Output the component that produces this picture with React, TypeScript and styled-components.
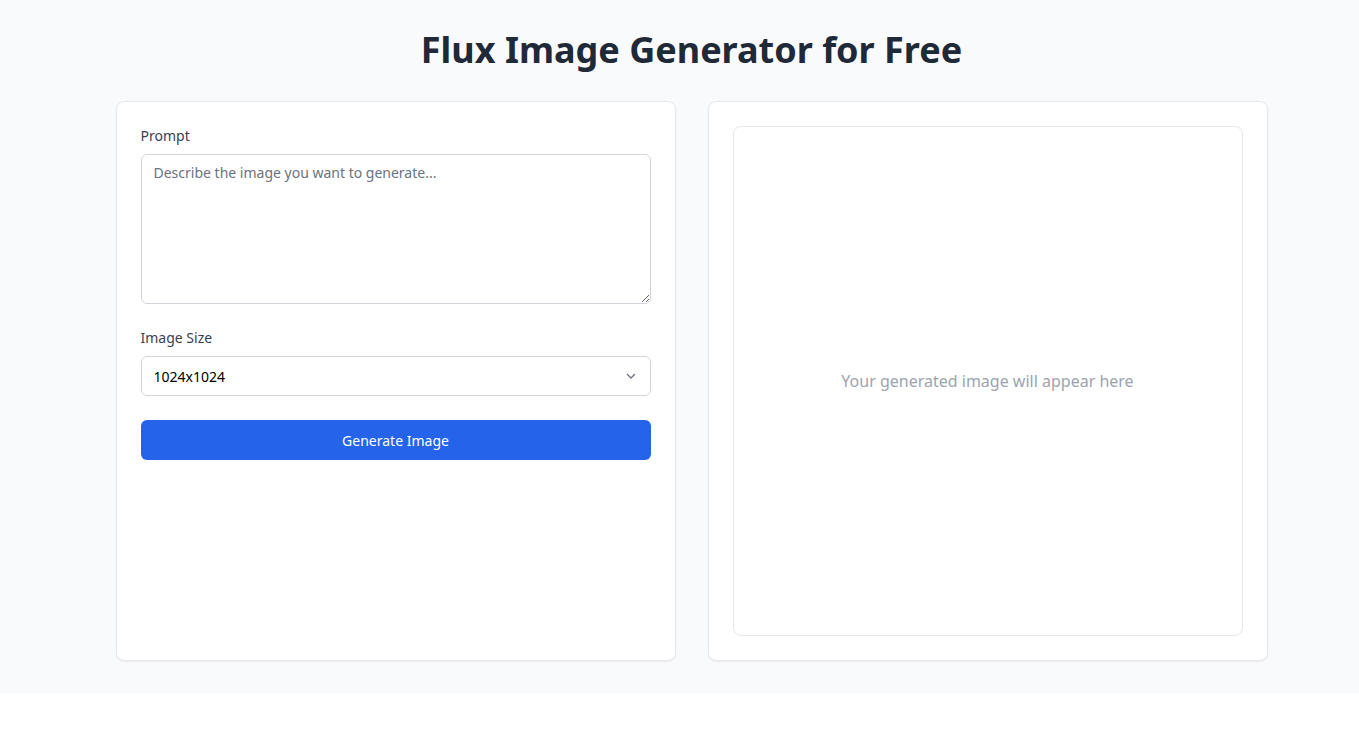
import React from "react";
import styled, {createGlobalStyle} from "styled-components";

const GlobalStyle = createGlobalStyle`
  html, body {
    margin: 0;
    padding: 0;
    background: #ffffff;
  }

  * {
    box-sizing: border-box;
  }

  body {
    font-family: "Noto Sans", "Open Sans", Arial, sans-serif;
    color: #1f2937;
  }
`

export const Page = styled.div`
  background: #f9fafb;
  padding: 30px 0 32px 24px;
`

export const Title = styled.h1`
  margin: 0 0 31px;
  text-align: center;
  font-size: 36px;
  line-height: 40px;
  font-weight: 700;
  color: #1f2937;
`

export const Columns = styled.div`
  width: 1152px;
  margin: 0 auto;
  display: grid;
  grid-template-columns: 1fr 1fr;
  gap: 32px;
`

export const Card = styled.div`
  background: #ffffff;
  border: 1px solid #e5e7eb;
  border-radius: 8px;
  box-shadow: 0 1px 2px rgba(0, 0, 0, 0.05);
  padding: 24px;
  display: flex;
  flex-direction: column;
`

export const Field = styled.div`
  display: flex;
  flex-direction: column;
  margin-bottom: 24px;
`

export const Label = styled.label`
  display: block;
  font-size: 14px;
  line-height: 20px;
  height: 20px;
  color: #374151;
  margin-bottom: 8px;
`

export const PromptInput = styled.textarea`
  display: block;
  height: 150px;
  width: 100%;
  border: 1px solid #d1d5db;
  border-radius: 6px;
  padding: 8px 12px;
  font-family: inherit;
  font-size: 14px;
  line-height: 20px;
  color: #111827;
  outline: none;
  resize: vertical;

  &::placeholder {
    color: #6b7280;
  }
`

export const SelectBox = styled.div`
  position: relative;
  height: 40px;
  border: 1px solid #d1d5db;
  border-radius: 6px;
  background: #ffffff;
`

export const Select = styled.select`
  appearance: none;
  width: 100%;
  height: 100%;
  border: none;
  background: transparent;
  padding: 0 36px 0 12px;
  font-family: inherit;
  font-size: 14px;
  color: #000000;
  outline: none;
`

export const Chevron = styled.svg`
  position: absolute;
  right: 14px;
  top: 15px;
  pointer-events: none;
`

export const Button = styled.button`
  height: 40px;
  width: 100%;
  border: none;
  border-radius: 6px;
  background: #2563eb;
  color: #ffffff;
  font-family: inherit;
  font-size: 14px;
  cursor: pointer;
`

export const Preview = styled.div`
  aspect-ratio: 1 / 1;
  width: 100%;
  border: 1px solid #e5e7eb;
  border-radius: 8px;
  display: flex;
  align-items: center;
  justify-content: center;
  font-size: 16px;
  color: #9ca3af;
`

const App = () => {
    return (
        <>
            <GlobalStyle/>
            <Page>
                <Title>Flux Image Generator for Free</Title>
                <Columns>
                    <Card>
                        <Field>
                            <Label htmlFor="prompt">Prompt</Label>
                            <PromptInput id="prompt" placeholder="Describe the image you want to generate..."/>
                        </Field>

                        <Field>
                            <Label htmlFor="size">Image Size</Label>
                            <SelectBox>
                                <Select id="size" defaultValue="1024x1024">
                                    <option value="1024x1024">1024x1024</option>
                                    <option value="512x512">512x512</option>
                                    <option value="768x1024">768x1024</option>
                                </Select>
                                <Chevron width="10" height="8" viewBox="0 0 10 8">
                                    <path d="M1 2l4 4 4-4" fill="none" stroke="#6b7280" strokeWidth="1.3"/>
                                </Chevron>
                            </SelectBox>
                        </Field>

                        <Button>Generate Image</Button>
                    </Card>

                    <Card>
                        <Preview>Your generated image will appear here</Preview>
                    </Card>
                </Columns>
            </Page>
        </>
    );
};

export default App;
